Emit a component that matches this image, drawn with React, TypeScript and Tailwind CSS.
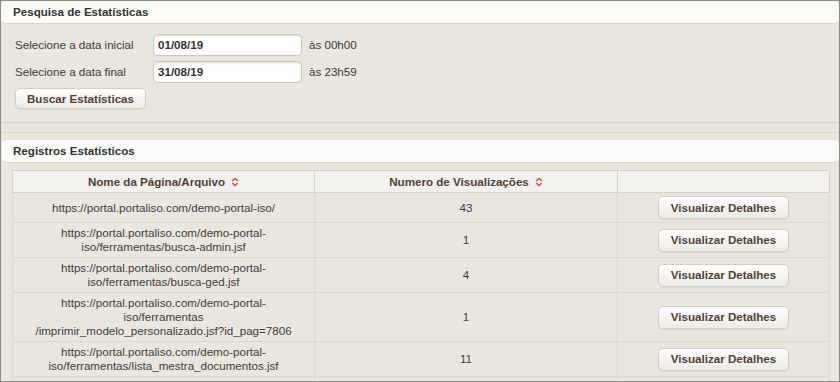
import React from "react";

const SortIcon = () => (
  <svg width="8" height="10" viewBox="0 0 8 10" className="inline-block ml-[6px] -mt-[2px] align-middle">
    <path d="M1.2 4 L4 1.3 L6.8 4" fill="none" stroke="#d0483e" strokeWidth="1.3" />
    <path d="M1.2 6 L4 8.7 L6.8 6" fill="none" stroke="#d0483e" strokeWidth="1.3" />
  </svg>
);

const rows: { lines: string[]; count: string }[] = [
  { lines: ["https://portal.portaliso.com/demo-portal-iso/"], count: "43" },
  { lines: ["https://portal.portaliso.com/demo-portal-", "iso/ferramentas/busca-admin.jsf"], count: "1" },
  { lines: ["https://portal.portaliso.com/demo-portal-", "iso/ferramentas/busca-ged.jsf"], count: "4" },
  {
    lines: [
      "https://portal.portaliso.com/demo-portal-",
      "iso/ferramentas",
      "/imprimir_modelo_personalizado.jsf?id_pag=7806",
    ],
    count: "1",
  },
  { lines: ["https://portal.portaliso.com/demo-portal-", "iso/ferramentas/lista_mestra_documentos.jsf"], count: "11" },
];

const btn =
  "rounded-[5px] border border-[#d2cfc6] bg-gradient-to-b from-[#fefefd] to-[#ecebe6] font-bold text-[#4f4235] shadow-[0_1px_1px_rgba(0,0,0,0.06)]";

export default function App() {
  return (
    <div
      className="w-[840px] h-[382px] overflow-hidden bg-[#e9e6dd] border border-[#8c8c86] text-[11.6px] text-[#3a3a3a]"
      style={{ fontFamily: "'Liberation Sans', Arial, sans-serif" }}
    >
      {/* Section 1 */}
      <div className="border-b border-[#d4d1c6]">
        <div className="h-[23px] rounded-[5px] bg-[#fbfbfa] border-b border-[#d9d6cb] flex items-center px-[12px] font-bold text-[#333]">
          Pesquisa de Estatísticas
        </div>
        <div className="px-[14px] pt-[10px] pb-[13px] flex flex-col gap-[5px]">
          <div className="flex items-center h-[22px]">
            <span className="w-[138px]">Selecione a data inicial</span>
            <div className="w-[149px] h-[22px] rounded-[4px] border border-[#c9c6bd] bg-white shadow-[inset_0_1px_2px_rgba(0,0,0,0.15)] flex items-center px-[4px] font-bold text-[#333]">
              01/08/19
            </div>
            <span className="ml-[7px]">às 00h00</span>
          </div>
          <div className="flex items-center h-[22px]">
            <span className="w-[138px]">Selecione a data final</span>
            <div className="w-[149px] h-[22px] rounded-[4px] border border-[#c9c6bd] bg-white shadow-[inset_0_1px_2px_rgba(0,0,0,0.15)] flex items-center px-[4px] font-bold text-[#333]">
              31/08/19
            </div>
            <span className="ml-[7px]">às 23h59</span>
          </div>
          <div>
            <button className={`${btn} w-[131px] h-[21px]`}>Buscar Estatísticas</button>
          </div>
        </div>
      </div>

      {/* Section 2 */}
      <div className="mt-[9px] border-t border-[#dcd9ce] pt-[7px]">
        <div className="h-[23px] rounded-[5px] bg-[#fbfbfa] border-b border-[#d9d6cb] flex items-center px-[11px] ml-[1px] font-bold text-[#333]">
          Registros Estatísticos
        </div>
        <div className="pl-[11px] pt-[7px]">
          <table className="w-[817px] border-collapse border border-[#cfcbc0] table-fixed">
            <colgroup>
              <col className="w-[302px]" />
              <col className="w-[303px]" />
              <col className="w-[212px]" />
            </colgroup>
            <thead>
              <tr className="h-[22px] bg-[#f2f1ed]">
                <th className="border border-[#d6d2c7] font-bold text-[#4f4235] text-center align-middle">
                  Nome da Página/Arquivo
                  <SortIcon />
                </th>
                <th className="border border-[#d6d2c7] font-bold text-[#4f4235] text-center align-middle">
                  Numero de Visualizações
                  <SortIcon />
                </th>
                <th className="border border-[#d6d2c7]"></th>
              </tr>
            </thead>
            <tbody>
              {rows.map((r, i) => (
                <tr key={i}>
                  <td className="border border-[#dcd8cd] text-center align-middle py-[3px] leading-[14px] text-[#3d3d3d]">
                    {r.lines.map((l, j) => (
                      <div key={j}>{l}</div>
                    ))}
                  </td>
                  <td className="border border-[#dcd8cd] text-center align-middle text-[#3d3d3d]">{r.count}</td>
                  <td className="border border-[#dcd8cd] text-center align-middle py-[3px]">
                    <button className={`${btn} w-[131px] h-[23px]`}>Visualizar Detalhes</button>
                  </td>
                </tr>
              ))}
              <tr className="h-[30px]">
                <td className="border border-[#dcd8cd]"></td>
                <td className="border border-[#dcd8cd]"></td>
                <td className="border border-[#dcd8cd]"></td>
              </tr>
            </tbody>
          </table>
        </div>
      </div>
    </div>
  );
}
